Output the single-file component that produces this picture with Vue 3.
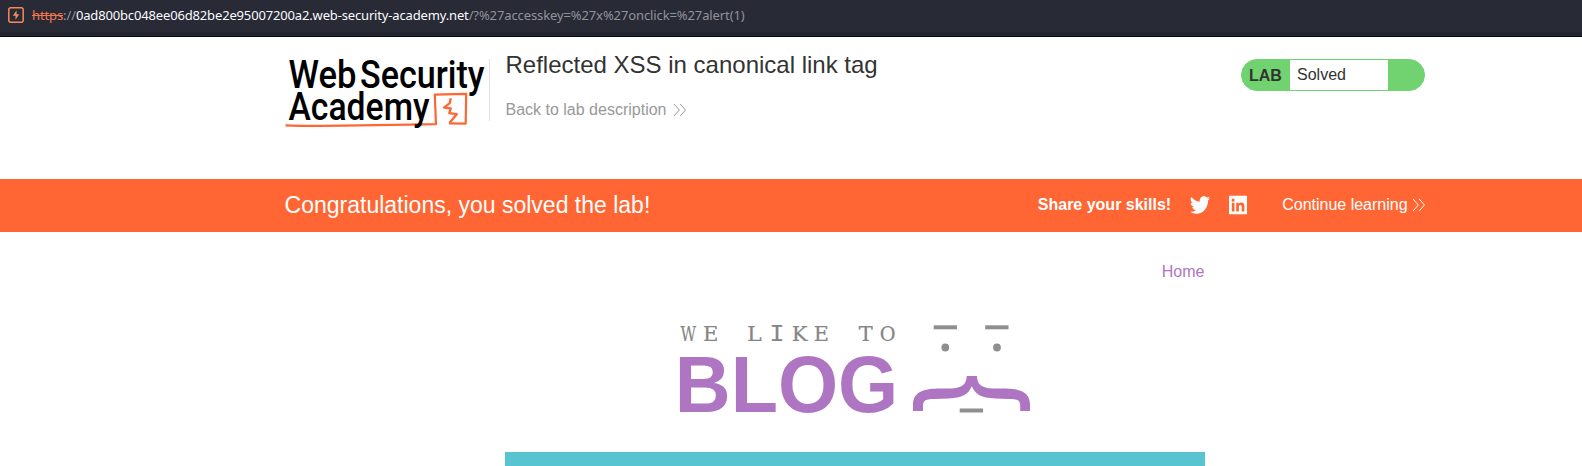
<script setup>
const slab = [
  { c: 'W', x: 20.4, w: 15.6 },
  { c: 'E', x: 43.1, w: 15.4 },
  { c: 'L', x: 87.1, w: 14.8 },
  { c: 'I', x: 109.4, w: 15, mono: true },
  { c: 'K', x: 131.7, w: 15.8 },
  { c: 'E', x: 153.7, w: 15.2 },
  { c: 'T', x: 198.7, w: 14 },
  { c: 'O', x: 219.7, w: 15.8 },
]
</script>

<template>
  <div class="page">
    <div class="urlbar">
      <svg class="favicon" width="16" height="16" viewBox="0 0 16 16">
        <rect x="0.8" y="0.8" width="14.4" height="14.4" rx="2" fill="none" stroke="#f6895a" stroke-width="1.5" />
        <path d="M8.6 3.2V7.3H11.2L7.5 12.8V8.8H4.8Z" fill="#f6895a" />
      </svg>
      <div class="url"><span class="scheme">https</span>://<span class="host">0ad800bc048ee06d82be2e95007200a2.web-security-academy.net</span>/?%27accesskey=%27x%27onclick=%27alert(1)</div>
    </div>

    <header class="header">
      <svg class="logo" width="203" height="80" viewBox="0 0 203 80">
        <g fill="none" stroke="#ff6633" stroke-linejoin="round">
          <path d="M0.5 72.3C40 74 80 72 151 71.2L149.8 41.7L181.2 40.8L180.7 70.6L164 70.4" stroke-width="2.2" />
          <path d="M165.7 45.3L164.7 50.2L159 54.6L165.8 55.4L164.3 60.2L171.8 61.2L164.4 70" stroke-width="2.3" />
        </g>
        <g class="logo-text">
          <text x="3.5" y="34.5" textLength="68" lengthAdjust="spacingAndGlyphs">Web</text>
          <text x="75" y="34.5" textLength="124.5" lengthAdjust="spacingAndGlyphs">Security</text>
          <text x="3.5" y="66.5" textLength="141" lengthAdjust="spacingAndGlyphs">Academy</text>
        </g>
      </svg>
      <div class="heading">
        <h2>Reflected XSS in canonical link tag</h2>
        <a class="back">Back to lab description
          <svg width="14" height="14" viewBox="0 0 14 14"><path d="M1 1 6.3 7 1 13M7.2 1 12.5 7 7.2 13" /></svg>
        </a>
      </div>
      <div class="status"><b>LAB</b><span>Solved</span></div>
    </header>

    <section class="banner">
      <div class="inner">
        <h4>Congratulations, you solved the lab!</h4>
        <div class="share">
          <b>Share your skills!</b>
          <svg class="twitter" width="20" height="18" viewBox="0 2 24 20" preserveAspectRatio="none">
            <path d="M23.95 4.57a10 10 0 0 1-2.82.77 4.96 4.96 0 0 0 2.16-2.72c-.95.55-2 .96-3.13 1.18a4.92 4.92 0 0 0-8.38 4.48C7.69 8.1 4.07 6.13 1.64 3.16a4.9 4.9 0 0 0 1.52 6.57 4.9 4.9 0 0 1-2.23-.61v.06a4.92 4.92 0 0 0 3.95 4.83 5 5 0 0 1-2.21.08 4.94 4.94 0 0 0 4.6 3.42A9.87 9.87 0 0 1 0 19.54a14 14 0 0 0 7.55 2.21c9.05 0 14-7.5 14-13.98l-.02-.63a9.94 9.94 0 0 0 2.42-2.57z" />
          </svg>
          <svg class="linkedin" width="20" height="20" viewBox="0 0 20 20">
            <path fill-rule="evenodd" d="M1.6 0.8H18.4Q19 .8 19 1.4V18.6Q19 19.2 18.4 19.2H1.6Q1 19.2 1 18.6V1.4Q1 .8 1.6 .8ZM3.8 7.8V16.4H6.5V7.8ZM5.1 3.6A1.55 1.55 0 1 0 5.1 6.7A1.55 1.55 0 1 0 5.1 3.6ZM8.2 7.8V16.4H10.9V12C10.9 10.8 11.3 9.9 12.4 9.9S13.7 10.9 13.7 12V16.4H16.4V11.5C16.4 9 15.6 7.6 13.4 7.6C12.1 7.6 11.3 8.2 10.8 9V7.8Z" />
          </svg>
          <a>Continue learning</a>
          <svg class="chev" width="14" height="14" viewBox="0 0 14 14"><path d="M1 1 6.3 7 1 13M7.2 1 12.5 7 7.2 13" /></svg>
        </div>
      </div>
    </section>

    <main class="content">
      <nav><a>Home</a></nav>
      <svg class="blog" width="380" height="120" viewBox="0 0 380 120">
        <g class="slab">
          <text v-for="(g, i) in slab" :key="i" :class="{ mono: g.mono }" :x="g.x" y="30.8" :textLength="g.w" lengthAdjust="spacingAndGlyphs">{{ g.c }}</text>
        </g>
        <text class="big" x="14.8" y="102" textLength="223.5" lengthAdjust="spacingAndGlyphs">BLOG</text>
        <g fill="#8f8f8f">
          <rect x="273.7" y="15.3" width="23.3" height="4" />
          <rect x="325.2" y="15.3" width="23.3" height="4" />
          <circle cx="285.3" cy="37.5" r="3.9" />
          <circle cx="337" cy="37.5" r="3.9" />
          <rect x="299.7" y="98.5" width="23.3" height="4" />
        </g>
        <path fill="#ae75c2" d="M306.7 66H317C317 74 321.5 78.3 333 78.5L346 78.6C363 79 370 84 370 95V101H360.2V96C360.2 90 357.5 89 348 88.9L335 88.4C321 88 315.3 84.5 311.8 76.3C308.3 84.5 302.5 88 288.5 88.4L275 88.9C265.8 89 263 90 263 96V101H253V95C253 84 260.5 79 277.5 78.6L290.5 78.5C302 78.3 306.7 74 306.7 66Z" />
      </svg>
      <div class="hero"></div>
    </main>
  </div>
</template>

<style>
body { background: #fff; overflow: hidden; }
</style>

<style scoped>
.page { height: 466px; overflow: hidden; font-family: "Liberation Sans", Arial, sans-serif; font-size: 16px; color: #333332; }
.urlbar { box-sizing: border-box; height: 37px; display: flex; align-items: flex-start; padding-left: 8px; background: linear-gradient(#282a36 0 32px, #22252f 32px 36px, #08090c 36px); }
.favicon { margin-top: 7px; }
.url { margin-left: 8px; line-height: 31px; font-family: "Noto Sans", sans-serif; font-size: 13px; letter-spacing: -0.11px; color: #92939a; white-space: nowrap; }
.scheme { color: #f0784c; text-decoration: line-through; }
.host { color: #fbfbfe; letter-spacing: -0.155px; }
.header { box-sizing: border-box; width: 1140px; height: 142px; margin-left: 285px; display: flex; align-items: flex-start; }
.logo { margin-top: 16px; margin-right: 1px; }
.heading { height: 62px; margin-top: 22px; padding-left: 15.5px; border-left: 1px solid #e2e2e2; }
.logo-text { font-family: Roboto, sans-serif; font-size: 38px; font-weight: 500; fill: #000; }
.heading h2 { margin: -8px 0 0; font-size: 24px; line-height: 28px; font-weight: 400; white-space: nowrap; }
.back { display: flex; align-items: center; gap: 7px; margin-top: 22px; line-height: 18px; color: #999; }
.back svg, .chev { fill: none; stroke: #999; stroke-width: 1; }
.status { box-sizing: border-box; display: flex; width: 184px; height: 32px; margin: 22px 0 0 auto; border: 1px solid #70d36f; border-radius: 16px; overflow: hidden; background: #70d36f; line-height: 30px; }
.status b { width: 41px; padding-left: 7px; line-height: 32px; }
.status span { width: 91px; padding-left: 7px; background: #fff; }
.banner { height: 53px; background: #ff6633; color: #fff; }
.inner { width: 1141px; height: 53px; margin-left: 284.6px; display: flex; align-items: center; justify-content: space-between; }
.inner h4 { margin: 0; font-size: 23px; font-weight: 400; }
.share { display: flex; align-items: center; margin-bottom: 2px; }
.share svg { fill: #fff; }
.share b, .share a { line-height: 18px; }
.share .twitter { margin-left: 19px; }
.share .linkedin { margin-left: 18px; }
.share a { margin-left: 34px; }
.share .chev { margin-left: 4px; fill: none; stroke: #fff; }
.content { width: 700px; margin-left: 505px; }
nav { height: 78px; padding: 31px 0.6px 0 0; box-sizing: border-box; line-height: 18px; text-align: right; color: #ae75c2; }
.blog { display: block; margin-left: 155px; }
.slab { font-family: "DejaVu Serif", serif; font-size: 21px; fill: #858585; stroke: #858585; stroke-width: 0.2; }
.slab .mono { font-family: "Liberation Mono", monospace; font-size: 23.5px; }
.big { font-family: "Liberation Sans", sans-serif; font-size: 80px; font-weight: 700; fill: #ae75c2; }
.hero { height: 14px; margin-top: 22px; background: #58c4d1; }
</style>
